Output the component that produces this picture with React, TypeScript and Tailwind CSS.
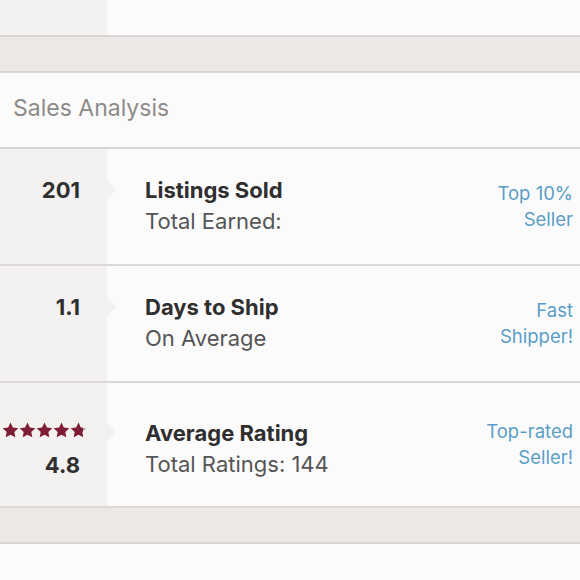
import React from "react";

const font = "font-['Inter','Liberation_Sans',sans-serif]";

function Star({ fill = 1 }: { fill?: number }) {
  const id = `sg${Math.round(fill * 100)}`;
  return (
    <svg width="17" height="16" viewBox="0 0 24 23">
      <defs>
        <linearGradient id={id}>
          <stop offset={`${fill * 100}%`} stopColor="#7e1d33" />
          <stop offset={`${fill * 100}%`} stopColor="#b9a9ad" />
        </linearGradient>
      </defs>
      <path
        d="M12 0.8l3.4 7.1 7.8 1-5.7 5.4 1.4 7.7L12 18.3 5.1 22l1.4-7.7L0.8 8.9l7.8-1z"
        fill={`url(#${id})`}
      />
    </svg>
  );
}

function Notch({ top }: { top: string }) {
  return (
    <div
      className={`absolute right-[-9px] ${top} w-0 h-0 border-y-[10px] border-y-transparent border-l-[9px] border-l-[#f3f2f0]`}
    />
  );
}

type Row = {
  h: string;
  left: React.ReactNode;
  notch: string;
  pt: string;
  title: string;
  sub: string;
  rpt: string;
  badge: [string, string];
};

const num = "text-[22px] font-bold text-[#2f2f2f] leading-[28px]";

const rows: Row[] = [
  {
    h: "h-[117px]",
    left: <div className={`pt-[27px] ${num}`}>201</div>,
    notch: "top-[31px]",
    pt: "pt-[26px]",
    title: "Listings Sold",
    sub: "Total Earned:",
    rpt: "pt-[31px]",
    badge: ["Top 10%", "Seller"],
  },
  {
    h: "h-[117px]",
    left: <div className={`pt-[27px] ${num}`}>1.1</div>,
    notch: "top-[31px]",
    pt: "pt-[26px]",
    title: "Days to Ship",
    sub: "On Average",
    rpt: "pt-[31px]",
    badge: ["Fast", "Shipper!"],
  },
  {
    h: "h-[125px]",
    left: (
      <div className="flex flex-col items-end">
        <div className="flex pt-[39px] mr-[-7px]">
          <Star />
          <Star />
          <Star />
          <Star />
          <Star fill={0.8} />
        </div>
        <div className={`pt-[13px] ${num}`}>4.8</div>
      </div>
    ),
    notch: "top-[39px]",
    pt: "pt-[35px]",
    title: "Average Rating",
    sub: "Total Ratings: 144",
    rpt: "pt-[35px]",
    badge: ["Top-rated", "Seller!"],
  },
];

export default function App() {
  return (
    <div className={`w-[580px] h-[580px] overflow-hidden bg-[#fcfbfc] ${font}`}>
      <div className="flex h-[37px] border-b-2 border-[#d9d5d4]">
        <div className="w-[107px] bg-[#f3f2f0]" />
      </div>
      <div className="h-[36px] bg-[#ebe8e5] border-b-2 border-[#d9d5d4]" />
      <div className="h-[76px] flex items-center px-[13px] pb-[3px] text-[23px] text-[#8c8b8a] border-b-2 border-[#d9d5d4]">
        Sales Analysis
      </div>
      {rows.map((r) => (
        <div key={r.title} className={`flex ${r.h} border-b-2 border-[#dcd8d8]`}>
          <div className="relative w-[107px] bg-[#f3f2f0] flex justify-end pr-[27px]">
            {r.left}
            <Notch top={r.notch} />
          </div>
          <div className={`flex-1 pl-[38px] ${r.pt}`}>
            <div className="text-[22px] font-bold text-[#2f2f2f] leading-[31px]">{r.title}</div>
            <div className="text-[22px] text-[#555] leading-[31px]">{r.sub}</div>
          </div>
          <div className={`pr-[7px] ${r.rpt} text-right text-[18.5px] text-[#5a9ec7] leading-[26px]`}>
            <div>{r.badge[0]}</div>
            <div>{r.badge[1]}</div>
          </div>
        </div>
      ))}
      <div className="h-[36px] bg-[#ebe8e5] border-b-2 border-[#d9d5d4]" />
    </div>
  );
}
